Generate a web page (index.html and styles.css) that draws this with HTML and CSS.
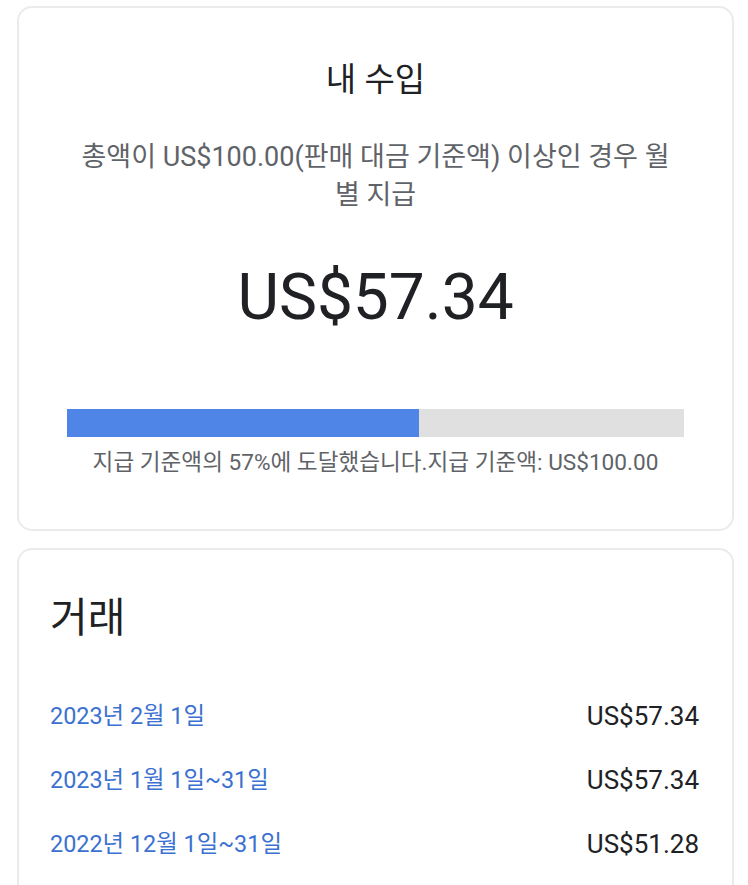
FILE: index.html
```html
<!DOCTYPE html>
<html lang="ko">
<head>
<meta charset="utf-8">
<title>내 수입</title>
<link rel="stylesheet" href="styles.css">
</head>
<body>
<main class="page">
  <section class="card earnings">
    <h1 class="title">내 수입</h1>
    <p class="subtitle">총액이 US$100.00(판매 대금 기준액) 이상인 경우 월별 지급</p>
    <div class="amount">US$57.34</div>
    <div class="bar"><div class="bar-fill" style="width:57%"></div></div>
    <p class="caption">지급 기준액의 57%에 도달했습니다.지급 기준액: US$100.00</p>
  </section>
  <section class="card transactions">
    <h2 class="tx-title">거래</h2>
    <ul class="tx-list">
      <li class="tx-row"><a class="tx-date" href="#">2023년 2월 1일</a><span class="tx-amount">US$57.34</span></li>
      <li class="tx-row"><a class="tx-date" href="#">2023년 1월 1일~31일</a><span class="tx-amount">US$57.34</span></li>
      <li class="tx-row"><a class="tx-date" href="#">2022년 12월 1일~31일</a><span class="tx-amount">US$51.28</span></li>
    </ul>
  </section>
</main>
</body>
</html>
```
FILE: styles.css
```css
html, body {
  margin: 0;
  padding: 0;
  background: #ffffff;
}
body {
  font-family: Roboto, "Noto Sans CJK KR", sans-serif;
  color: #202124;
}
.page {
  display: flex;
  flex-direction: column;
  gap: 17px;
  padding: 6px 14px 0 17px;
}
.card {
  border: 2px solid #ebebed;
  border-radius: 15px;
  background: #ffffff;
}
.earnings {
  padding: 52px 48px 0 48px;
  height: 469px;
  text-align: center;
}
.title {
  margin: 0;
  font-size: 33px;
  font-weight: 400;
  line-height: 40px;
  color: #202124;
}
.subtitle {
  margin: 38px 0 0;
  padding: 0 8px;
  font-size: 27px;
  line-height: 38px;
  color: #5f6368;
}
.amount {
  margin-top: 44px;
  font-size: 64px;
  line-height: 80px;
  color: #202124;
}
.bar {
  margin-top: 71px;
  height: 28px;
  background: #e0e0e0;
}
.bar-fill {
  height: 100%;
  background: #5085e8;
}
.caption {
  margin: 12px 0 0;
  font-size: 22.6px;
  line-height: 28px;
  color: #5f6368;
}
.transactions {
  padding: 42px 33px 20px 31px;
  min-height: 300px;
}
.tx-title {
  margin: 0;
  font-size: 41px;
  font-weight: 400;
  line-height: 52px;
  color: #202124;
}
.tx-list {
  list-style: none;
  margin: 56px 0 0;
  padding: 0;
  display: flex;
  flex-direction: column;
  gap: 32px;
}
.tx-row {
  display: flex;
  justify-content: space-between;
  align-items: center;
  line-height: 32px;
}
.tx-date {
  font-size: 23.4px;
  color: #3b71d1;
  text-decoration: none;
}
.tx-amount {
  font-size: 26px;
  color: #202124;
}
```
